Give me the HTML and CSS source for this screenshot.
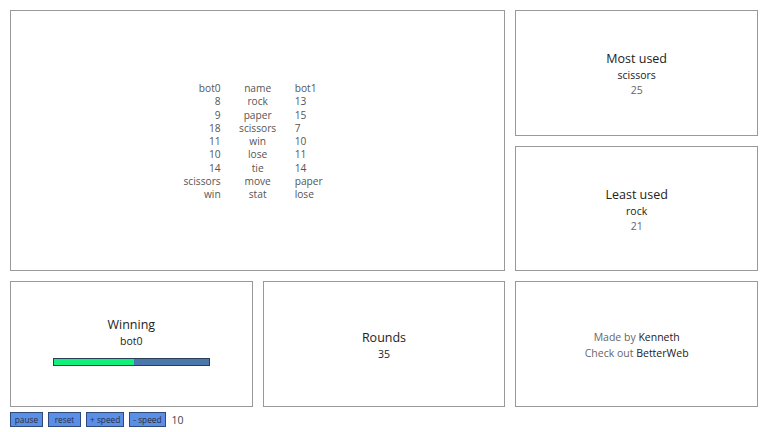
FILE: index.html
```html
<!DOCTYPE html>
<html>
<head>
<meta charset="utf-8">
<link rel="stylesheet" href="styles.css">
</head>
<body>
<div class="grid">
  <div class="box main">
    <table class="stats">
      <tr><td class="l">bot0</td><td class="c">name</td><td class="r">bot1</td></tr>
      <tr><td class="l">8</td><td class="c">rock</td><td class="r">13</td></tr>
      <tr><td class="l">9</td><td class="c">paper</td><td class="r">15</td></tr>
      <tr><td class="l">18</td><td class="c">scissors</td><td class="r">7</td></tr>
      <tr><td class="l">11</td><td class="c">win</td><td class="r">10</td></tr>
      <tr><td class="l">10</td><td class="c">lose</td><td class="r">11</td></tr>
      <tr><td class="l">14</td><td class="c">tie</td><td class="r">14</td></tr>
      <tr><td class="l">scissors</td><td class="c">move</td><td class="r">paper</td></tr>
      <tr><td class="l">win</td><td class="c">stat</td><td class="r">lose</td></tr>
    </table>
  </div>
  <div class="box">
    <div class="title">Most used</div>
    <div class="sub">scissors</div>
    <div class="num">25</div>
  </div>
  <div class="box">
    <div class="title">Least used</div>
    <div class="sub">rock</div>
    <div class="num">21</div>
  </div>
  <div class="box winning">
    <div class="title">Winning</div>
    <div class="sub">bot0</div>
    <div class="bar"><div class="fill" style="width:52%"></div></div>
  </div>
  <div class="box">
    <div class="title">Rounds</div>
    <div class="sub">35</div>
  </div>
  <div class="box credit">
    <div><span class="muted">Made by </span>Kenneth</div>
    <div><span class="muted">Check out </span>BetterWeb</div>
  </div>
</div>
<div class="controls">
  <button class="btn">pause</button>
  <button class="btn">reset</button>
  <button class="btn">+ speed</button>
  <button class="btn">- speed</button>
  <span class="speed">10</span>
</div>
</body>
</html>
```
FILE: styles.css
```css
html, body {
  margin: 0;
  padding: 0;
  background: #fff;
}
body {
  padding: 10px;
  font-family: "Open Sans", sans-serif;
  color: #222;
}
.grid {
  display: grid;
  grid-template-columns: repeat(3, 1fr);
  grid-template-rows: repeat(3, 1fr);
  gap: 10px;
  width: 748px;
  height: 397px;
}
.box {
  border: 1px solid #999;
  display: flex;
  flex-direction: column;
  align-items: center;
  justify-content: center;
  box-sizing: border-box;
}
.main {
  grid-column: 1 / 3;
  grid-row: 1 / 3;
}
.stats {
  border-collapse: collapse;
  table-layout: fixed;
  width: 222px;
  font-size: 10.2px;
  color: #555;
  margin-top: 2px;
}
.stats td {
  padding: 0;
  width: 74px;
  line-height: 13.25px;
  white-space: nowrap;
}
.stats .l { text-align: right; }
.stats .c { text-align: center; }
.stats .r { text-align: left; }
.title {
  font-size: 12.5px;
  line-height: 16px;
  color: #222;
  margin-top: 4px;
}
.sub {
  font-size: 10.5px;
  line-height: 16px;
  color: #222;
}
.num {
  font-size: 10.5px;
  line-height: 15px;
  color: #666;
}
.winning .title { margin-top: 0; }
.winning .bar {
  margin-top: 9px;
  width: 155px;
  height: 6px;
  border: 1px solid #2a3e55;
  background: #4a78ad;
}
.winning .fill {
  height: 100%;
  background: #10f07a;
}
.winning { padding-bottom: 6px; }
.credit {
  font-size: 10.5px;
  line-height: 16px;
  color: #222;
  padding-top: 2px;
}
.credit .muted { color: #666; }
.controls {
  display: flex;
  align-items: center;
  gap: 5px;
  margin-top: 5px;
}
.btn {
  font-family: "Open Sans", sans-serif;
  font-size: 8.3px;
  line-height: 11px;
  color: #2a2f3a;
  background: #5b8ee6;
  border: 1px solid #2d4a7a;
  padding: 1px 3px;
  min-width: 33px;
  margin: 0;
  height: 15px;
}
.speed {
  font-size: 10.5px;
  color: #444;
  margin-left: 1px;
}
```
